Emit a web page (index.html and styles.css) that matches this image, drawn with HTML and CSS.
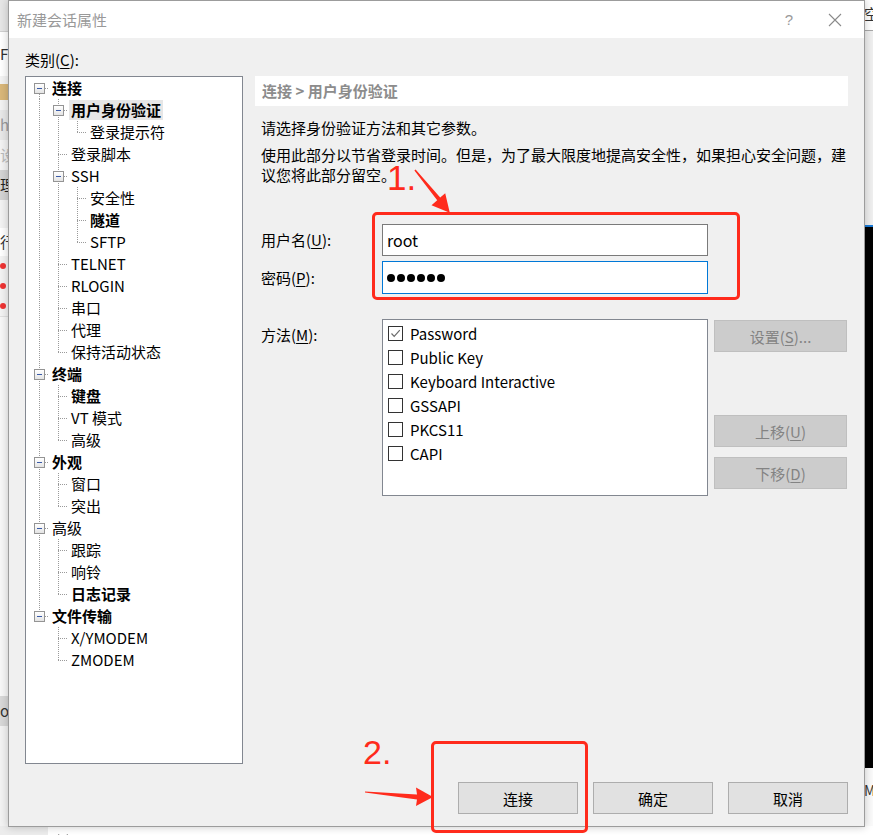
FILE: index.html
```html
<!DOCTYPE html>
<html lang="zh-CN">
<head>
<meta charset="utf-8">
<title>新建会话属性</title>
<link rel="stylesheet" href="styles.css">
</head>
<body>
<div class="desk">
  <div class="bg-left">
    <div class="bl-a"></div>
    <div class="bl-b">F</div>
    <div class="bl-folder"></div>
    <div class="bl-c">h</div>
    <div class="bl-d">设</div>
    <div class="bl-e">理</div>
    <div class="bl-f">行</div>
    <div class="bl-dot"></div>
    <div class="bl-dot"></div>
    <div class="bl-dot"></div>
    <div class="bl-g"></div>
    <div class="bl-h">ot</div>
  </div>
  <div class="bg-right">
    <div class="br-a">空</div>
    <div class="br-b"></div>
    <div class="br-c"></div>
    <div class="br-d">M</div>
  </div>
  <div class="bg-bottom">
    <div class="bb-a"></div>
    <div class="bb-icon">
      <svg width="14" height="10" viewBox="0 0 14 10"><path d="M2 1 L7 5 L12 1 M7 5 V10" fill="none" stroke="#444" stroke-width="2"/></svg>
    </div>
  </div>

  <div class="dialog">
    <div class="titlebar">
      <span class="title">新建会话属性</span>
      <span class="tb-help">?</span>
      <span class="tb-close">
        <svg width="14" height="14" viewBox="0 0 14 14"><path d="M1 1 L13 13 M13 1 L1 13" stroke="#8a8a8a" stroke-width="1.1" fill="none"/></svg>
      </span>
    </div>

    <div class="main">
      <div class="left">
        <div class="cat-label">类别(<u>C</u>):</div>
        <div class="tree">
          <div class="row"><span class="c bx dn"><i></i></span><span class="lbl b">连接</span></div>
          <div class="row"><span class="c v"></span><span class="c bx ud"><i></i></span><span class="lbl b sel">用户身份验证</span></div>
          <div class="row"><span class="c v"></span><span class="c v"></span><span class="c ell"></span><span class="lbl">登录提示符</span></div>
          <div class="row"><span class="c v"></span><span class="c tee"></span><span class="lbl">登录脚本</span></div>
          <div class="row"><span class="c v"></span><span class="c bx ud"><i></i></span><span class="lbl">SSH</span></div>
          <div class="row"><span class="c v"></span><span class="c v"></span><span class="c tee"></span><span class="lbl">安全性</span></div>
          <div class="row"><span class="c v"></span><span class="c v"></span><span class="c tee"></span><span class="lbl b">隧道</span></div>
          <div class="row"><span class="c v"></span><span class="c v"></span><span class="c ell"></span><span class="lbl">SFTP</span></div>
          <div class="row"><span class="c v"></span><span class="c tee"></span><span class="lbl">TELNET</span></div>
          <div class="row"><span class="c v"></span><span class="c tee"></span><span class="lbl">RLOGIN</span></div>
          <div class="row"><span class="c v"></span><span class="c tee"></span><span class="lbl">串口</span></div>
          <div class="row"><span class="c v"></span><span class="c tee"></span><span class="lbl">代理</span></div>
          <div class="row"><span class="c v"></span><span class="c ell"></span><span class="lbl">保持活动状态</span></div>
          <div class="row"><span class="c bx ud"><i></i></span><span class="lbl b">终端</span></div>
          <div class="row"><span class="c v"></span><span class="c tee"></span><span class="lbl b">键盘</span></div>
          <div class="row"><span class="c v"></span><span class="c tee"></span><span class="lbl">VT 模式</span></div>
          <div class="row"><span class="c v"></span><span class="c ell"></span><span class="lbl">高级</span></div>
          <div class="row"><span class="c bx ud"><i></i></span><span class="lbl b">外观</span></div>
          <div class="row"><span class="c v"></span><span class="c tee"></span><span class="lbl">窗口</span></div>
          <div class="row"><span class="c v"></span><span class="c ell"></span><span class="lbl">突出</span></div>
          <div class="row"><span class="c bx ud"><i></i></span><span class="lbl">高级</span></div>
          <div class="row"><span class="c v"></span><span class="c tee"></span><span class="lbl">跟踪</span></div>
          <div class="row"><span class="c v"></span><span class="c tee"></span><span class="lbl">响铃</span></div>
          <div class="row"><span class="c v"></span><span class="c ell"></span><span class="lbl b">日志记录</span></div>
          <div class="row"><span class="c bx up"><i></i></span><span class="lbl b">文件传输</span></div>
          <div class="row"><span class="c"></span><span class="c tee"></span><span class="lbl">X/YMODEM</span></div>
          <div class="row"><span class="c"></span><span class="c ell"></span><span class="lbl">ZMODEM</span></div>
        </div>
      </div>

      <div class="right">
        <div class="crumb">连接 &gt; 用户身份验证</div>
        <p class="desc d1">请选择身份验证方法和其它参数。</p>
        <p class="desc d2">使用此部分以节省登录时间。但是，为了最大限度地提高安全性，如果担心安全问题，建<br>议您将此部分留空。</p>

        <div class="form-row r-user">
          <label class="flabel">用户名(<u>U</u>):</label>
          <div class="inp">root</div>
        </div>
        <div class="form-row r-pass">
          <label class="flabel">密码(<u>P</u>):</label>
          <div class="inp focus"><span class="dot"></span><span class="dot"></span><span class="dot"></span><span class="dot"></span><span class="dot"></span><span class="dot"></span></div>
        </div>

        <div class="method-row">
          <label class="flabel mlabel">方法(<u>M</u>):</label>
          <div class="mlist">
            <div class="mi"><span class="cb"><svg width="13" height="13" viewBox="0 0 13 13"><path d="M2.5 6.5 L5.2 9.3 L10.8 3.2" fill="none" stroke="#6b6b6b" stroke-width="1.2"/></svg></span>Password</div>
            <div class="mi"><span class="cb"></span>Public Key</div>
            <div class="mi"><span class="cb"></span>Keyboard Interactive</div>
            <div class="mi"><span class="cb"></span>GSSAPI</div>
            <div class="mi"><span class="cb"></span>PKCS11</div>
            <div class="mi"><span class="cb"></span>CAPI</div>
          </div>
          <div class="mbtns">
            <div class="dbtn">设置(<u>S</u>)...</div>
            <div class="dbtn up">上移(<u>U</u>)</div>
            <div class="dbtn">下移(<u>D</u>)</div>
          </div>
        </div>
      </div>
    </div>

    <div class="footer">
      <div class="btn">连接</div>
      <div class="btn">确定</div>
      <div class="btn">取消</div>
    </div>
  </div>

  <div class="mark box1"></div>
  <div class="mark box2"></div>
  <div class="num n1">1.</div>
  <div class="num n2">2.</div>
  <svg class="arrows" width="873" height="835" viewBox="0 0 873 835">
    <polygon fill="#ff2b1c" points="414.4,170.4 437.2,200.2 431.5,205.2 449.8,212.8 445.2,193.2 440.2,197.6 415.6,169.6"/>
    <polygon fill="#ff2b1c" points="365,791.4 417,794.6 416,787.5 433,797 416,806 417,799.4 365,792.6"/>
  </svg>
</div>
</body>
</html>
```

FILE: styles.css
```css
* { box-sizing: border-box; }

body {
  margin: 0;
  font-family: "Noto Sans CJK SC", "Noto Sans", sans-serif;
  font-size: 15px;
  color: #000;
}

p { margin: 0; }
u { text-decoration: underline; text-underline-offset: 2px; }

.desk {
  position: relative;
  width: 873px;
  height: 835px;
  overflow: hidden;
  background: #ffffff;
}

/* ---------- background application (behind the dialog) ---------- */
.bg-left {
  position: absolute;
  left: 0;
  top: 0;
  width: 9px;
  height: 835px;
  background: #f3f3f3;
  display: flex;
  flex-direction: column;
  font-size: 15px;
  line-height: 20px;
  overflow: hidden;
}
.bl-a { height: 32px; background: #e6e6e6; border-bottom: 1px solid #d0d0d0; }
.bl-b { height: 44px; padding-top: 12px; color: #333; background: #fff; }
.bl-folder { height: 16px; margin-top: 8px; background: #d9b77a; }
.bl-c { height: 30px; margin-top: 10px; color: #999; background: #e8e8e8; padding-top: 5px; }
.bl-d { height: 30px; color: #bbb; padding-top: 5px; }
.bl-e { height: 30px; background: #d4d4d4; color: #222; padding-top: 5px; }
.bl-f { height: 28px; margin-top: 28px; color: #333; padding-top: 4px; background: #fff; }
.bl-dot { width: 6px; height: 6px; border-radius: 50%; background: #e33; margin: 7px 0 7px 0; }
.bl-g { height: 380px; background: #f7f7f7; border-top: 1px solid #e0e0e0; }
.bl-h { height: 30px; background: #d8d8d8; color: #333; padding-top: 5px; }

.bg-right {
  position: absolute;
  left: 864px;
  top: 0;
  width: 9px;
  height: 835px;
  background: #ececec;
  display: flex;
  flex-direction: column;
}
.br-a { height: 31px; background: #fff; border-bottom: 1px solid #a8a8a8; font-size: 15px; line-height: 28px; color: #333; }
.br-b { height: 196px; background: #efefef; border-bottom: 2px solid #1a7bd8; }
.br-c { height: 541px; background: #000; }
.br-d { flex: 1; background: #fafafa; color: #333; padding-top: 12px; font-size: 14px; }

.bg-bottom {
  position: absolute;
  left: 0;
  top: 826px;
  width: 873px;
  height: 9px;
  background: #fff;
  display: flex;
}
.bb-a { width: 48px; background: #ececec; }
.bb-icon { margin-left: 8px; padding-top: 1px; }

/* ---------- dialog ---------- */
.dialog {
  position: absolute;
  left: 8px;
  top: 0;
  width: 857px;
  height: 827px;
  border: 1px solid #9c9c9c;
  background: #f0f0f0;
  display: flex;
  flex-direction: column;
  box-shadow: 0 0 8px rgba(0, 0, 0, 0.22);
}

.titlebar {
  height: 37px;
  flex: none;
  background: #fff;
  display: flex;
  align-items: center;
  padding: 0 6px 0 8px;
}
.title { color: #999; font-size: 15px; line-height: 20px; }
.tb-help {
  margin-left: auto;
  width: 46px;
  text-align: center;
  color: #9a9a9a;
  font-family: "Liberation Sans", sans-serif;
  font-size: 15px;
}
.tb-close {
  width: 46px;
  height: 37px;
  display: flex;
  align-items: center;
  justify-content: center;
}

.main {
  height: 726px;
  flex: none;
  display: flex;
  gap: 12px;
  padding: 0 16px;
}

.left {
  width: 218px;
  display: flex;
  flex-direction: column;
}
.cat-label {
  height: 38px;
  padding-top: 12px;
  line-height: 20px;
}

.tree {
  flex: 1;
  background: #fff;
  border: 1px solid #828790;
  padding-left: 4px;
}
.row {
  height: 22px;
  display: flex;
  align-items: center;
}
.c {
  flex: none;
  width: 19px;
  height: 22px;
  background-repeat: no-repeat;
}
.v {
  background-image: repeating-linear-gradient(to bottom, #9a9a9a 0 1px, transparent 1px 2px);
  background-size: 1px 22px;
  background-position: 9px 0;
}
.tee {
  background-image:
    repeating-linear-gradient(to bottom, #9a9a9a 0 1px, transparent 1px 2px),
    repeating-linear-gradient(to right, #9a9a9a 0 1px, transparent 1px 2px);
  background-size: 1px 22px, 10px 1px;
  background-position: 9px 0, 9px 11px;
}
.ell {
  background-image:
    repeating-linear-gradient(to bottom, #9a9a9a 0 1px, transparent 1px 2px),
    repeating-linear-gradient(to right, #9a9a9a 0 1px, transparent 1px 2px);
  background-size: 1px 12px, 10px 1px;
  background-position: 9px 0, 9px 11px;
}
.bx {
  display: flex;
  align-items: center;
  justify-content: flex-start;
  padding-left: 4px;
  background-image:
    repeating-linear-gradient(to bottom, #9a9a9a 0 1px, transparent 1px 2px),
    repeating-linear-gradient(to right, #9a9a9a 0 1px, transparent 1px 2px);
}
.bx.dn { background-size: 1px 11px, 6px 1px; background-position: 9px 11px, 15px 11px; }
.bx.up { background-size: 1px 11px, 6px 1px; background-position: 9px 0, 15px 11px; }
.bx.ud { background-size: 1px 22px, 6px 1px; background-position: 9px 0, 15px 11px; }
.bx i {
  display: block;
  width: 11px;
  height: 11px;
  border: 1px solid #949494;
  background:
    linear-gradient(#3a5ba8, #3a5ba8) center / 5px 1px no-repeat,
    linear-gradient(#ffffff, #e4e4e4);
}

.lbl {
  margin-left: 1px;
  padding: 0 2px;
  line-height: 20px;
  white-space: nowrap;
}
.lbl.b { font-weight: 700; }
.lbl.sel { background: #e6e6e6; }

/* ---------- right panel ---------- */
.right {
  width: 593px;
  padding-top: 38px;
}
.crumb {
  height: 30px;
  background: #fff;
  padding-left: 7px;
  line-height: 30px;
  color: #8c8c8c;
  font-weight: 700;
}
.desc {
  padding-left: 6px;
  line-height: 20px;
  white-space: nowrap;
}
.d1 { margin-top: 12px; }
.d2 { margin-top: 7px; }

.form-row {
  display: flex;
  align-items: center;
}
.r-user { margin-top: 39px; }
.r-pass { margin-top: 5px; }
.flabel {
  width: 127px;
  padding-left: 6px;
  line-height: 20px;
  flex: none;
}
.inp {
  width: 326px;
  height: 32px;
  background: #fff;
  border: 1px solid #7a7a7a;
  padding-left: 4px;
  display: flex;
  align-items: center;
  font-size: 16px;
  gap: 2px;
}
.inp.focus { border-color: #0078d7; height: 33px; }
.dot {
  width: 8px;
  height: 8px;
  border-radius: 50%;
  background: #000;
}

.method-row {
  margin-top: 25px;
  display: flex;
  align-items: flex-start;
}
.mlabel { padding-top: 6px; }
.mlist {
  width: 326px;
  height: 177px;
  background: #fff;
  border: 1px solid #828790;
  padding: 1px 0 0 5px;
}
.mi {
  height: 24px;
  display: flex;
  align-items: center;
  gap: 7px;
  white-space: nowrap;
}
.cb {
  width: 15px;
  height: 15px;
  border: 1px solid #333;
  background: #fff;
  display: flex;
  align-items: center;
  justify-content: center;
}
.mbtns {
  margin-left: 6px;
  padding-top: 1px;
  width: 133px;
  display: flex;
  flex-direction: column;
}
.dbtn {
  height: 32px;
  background: #cccccc;
  border: 1px solid #bfbfbf;
  color: #838383;
  display: flex;
  align-items: center;
  justify-content: center;
}
.dbtn.up { margin-top: 63px; margin-bottom: 10px; }

/* ---------- footer ---------- */
.footer {
  flex: 1;
  display: flex;
  justify-content: flex-end;
  gap: 15px;
  padding: 18px 16px 12px;
}
.btn {
  width: 120px;
  height: 32px;
  background: #e1e1e1;
  border: 1px solid #adadad;
  display: flex;
  align-items: center;
  justify-content: center;
}

/* ---------- red annotations (overlay) ---------- */
.mark {
  position: absolute;
  border: 3px solid #ff2b1c;
  border-radius: 5px;
}
.box1 { left: 372px; top: 212px; width: 368px; height: 88px; }
.box2 { left: 431px; top: 741px; width: 157px; height: 92px; }
.num {
  position: absolute;
  color: #ff2b1c;
  font-family: "Liberation Sans", Arial, sans-serif;
  line-height: 1;
}
.n1 { left: 387px; top: 160px; font-size: 35px; }
.n2 { left: 363px; top: 735px; font-size: 34px; }
.arrows { position: absolute; left: 0; top: 0; pointer-events: none; }
```
